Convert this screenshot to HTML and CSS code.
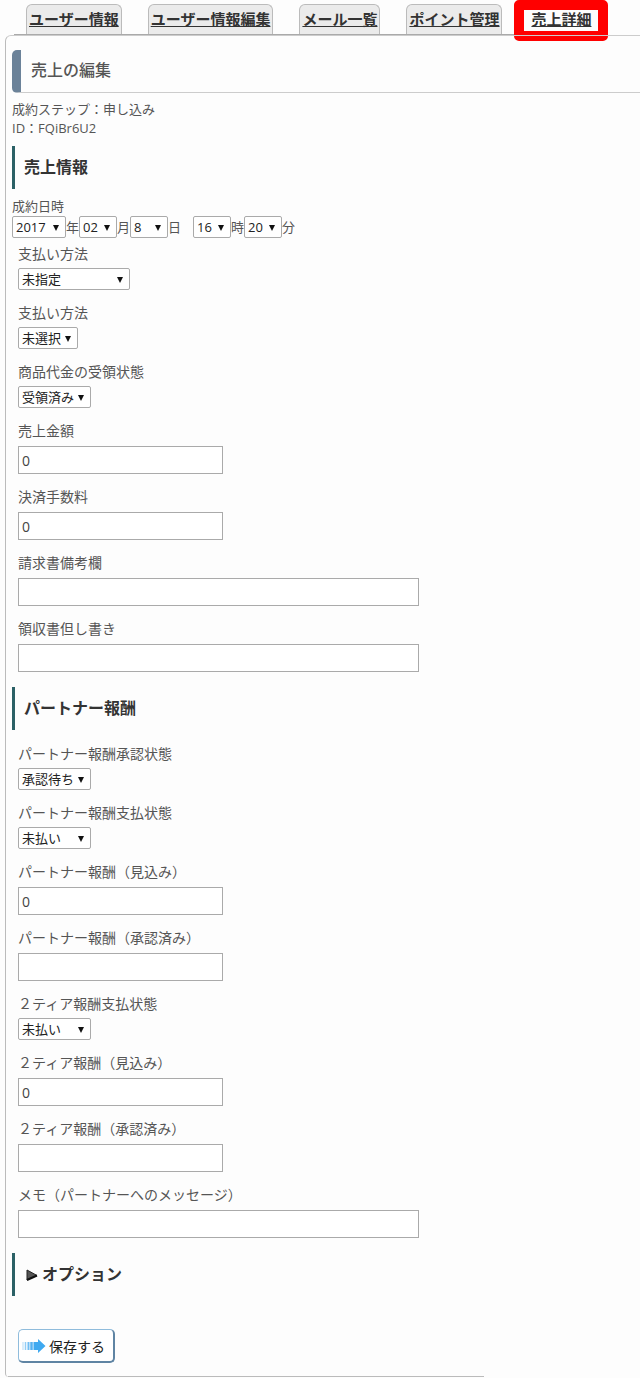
FILE: index.html
```html
<!DOCTYPE html>
<html lang="ja">
<head>
    <meta charset="UTF-8">
    <meta name="viewport" content="width=device-width, initial-scale=1">
    <title>売上の編集</title>
    <link rel="stylesheet" href="styles.css">
</head>
<body>
    <!-- タブ -->
    <nav class="tabs">
        <a class="tab" href="#">ユーザー情報</a>
        <a class="tab" href="#">ユーザー情報編集</a>
        <a class="tab" href="#">メール一覧</a>
        <a class="tab" href="#">ポイント管理</a>
        <a class="tab active" href="#">売上詳細</a>
    </nav>

    <main class="panel">
        <h1 class="page-title">売上の編集</h1>
        <div class="summary">
            <div>成約ステップ：申し込み</div>
            <div>ID：FQiBr6U2</div>
        </div>

        <form>
            <!-- 売上情報 -->
            <h2 class="section-title">売上情報</h2>
            <div class="date-label">成約日時</div>
            <div class="date-row">
                <span class="select w-year"><select id="year" aria-label="年"><option>2017</option></select></span>
                <label for="year">年</label>
                <span class="select w-num"><select id="month" aria-label="月"><option>02</option></select></span>
                <label for="month">月</label>
                <span class="select w-num"><select id="day" aria-label="日"><option>8</option></select></span>
                <label class="day-unit" for="day">日</label>
                <span class="select w-num"><select id="hour" aria-label="時"><option>16</option></select></span>
                <label for="hour">時</label>
                <span class="select w-num"><select id="minute" aria-label="分"><option>20</option></select></span>
                <label for="minute">分</label>
            </div>

            <div class="fields">
                <div class="field">
                    <label for="pay1">支払い方法</label>
                    <span class="select w-long"><select id="pay1"><option>未指定</option></select></span>
                </div>
                <div class="field">
                    <label for="pay2">支払い方法</label>
                    <span class="select w-short"><select id="pay2"><option>未選択</option></select></span>
                </div>
                <div class="field">
                    <label for="receipt">商品代金の受領状態</label>
                    <span class="select w-mid"><select id="receipt"><option>受領済み</option></select></span>
                </div>
                <div class="field">
                    <label for="amount">売上金額</label>
                    <input type="text" id="amount" value="0">
                </div>
                <div class="field">
                    <label for="fee">決済手数料</label>
                    <input type="text" id="fee" value="0">
                </div>
                <div class="field">
                    <label for="invoice">請求書備考欄</label>
                    <input type="text" class="wide" id="invoice">
                </div>
                <div class="field">
                    <label for="proviso">領収書但し書き</label>
                    <input type="text" class="wide" id="proviso">
                </div>
            </div>

            <!-- パートナー報酬 -->
            <h2 class="section-title">パートナー報酬</h2>
            <div class="fields">
                <div class="field">
                    <label for="approve">パートナー報酬承認状態</label>
                    <span class="select w-mid"><select id="approve"><option>承認待ち</option></select></span>
                </div>
                <div class="field">
                    <label for="paid">パートナー報酬支払状態</label>
                    <span class="select w-mid"><select id="paid"><option>未払い</option></select></span>
                </div>
                <div class="field">
                    <label for="reward1">パートナー報酬（見込み）</label>
                    <input type="text" id="reward1" value="0">
                </div>
                <div class="field">
                    <label for="reward2">パートナー報酬（承認済み）</label>
                    <input type="text" id="reward2">
                </div>
                <div class="field">
                    <label for="tier-paid">２ティア報酬支払状態</label>
                    <span class="select w-mid"><select id="tier-paid"><option>未払い</option></select></span>
                </div>
                <div class="field">
                    <label for="tier1">２ティア報酬（見込み）</label>
                    <input type="text" id="tier1" value="0">
                </div>
                <div class="field">
                    <label for="tier2">２ティア報酬（承認済み）</label>
                    <input type="text" id="tier2">
                </div>
                <div class="field">
                    <label for="memo">メモ（パートナーへのメッセージ）</label>
                    <input type="text" class="wide" id="memo">
                </div>
            </div>

            <!-- オプション -->
            <h2 class="section-title">
                <svg class="toggle" width="12" height="12" viewBox="0 0 12 12" aria-hidden="true">
                    <path d="M1 1 L11 6.5 L1 11 Z" fill="#555" stroke="#222"/>
                    <path d="M1 11 L11 6.5" stroke="#111" stroke-width="2"/>
                </svg>
                オプション
            </h2>

            <button type="submit" class="save">
                <svg width="24" height="14" viewBox="0 0 24 14" aria-hidden="true">
                    <path d="M1 3V11" stroke="#b5dcf7" stroke-width="1"/>
                    <path d="M3.5 3V11" stroke="#93cdf5" stroke-width="1.5"/>
                    <path d="M6.5 3V11" stroke="#6fbdf3" stroke-width="2"/>
                    <path d="M9.5 3V11" stroke="#55b1f0" stroke-width="2.5"/>
                    <path d="M11.5 3H16V0L23.5 7L16 14V11H11.5Z" fill="#3fa9f0"/>
                </svg>
                保存する
            </button>
        </form>
    </main>
</body>
</html>
```
FILE: styles.css
```css
* {
    box-sizing: border-box;
}

body {
    margin: 0;
    font-family: "Open Sans", "Noto Sans CJK JP", sans-serif;
    font-size: 13px;
    line-height: 19px;
    color: #555;
    background: #fdfdfd;
}

/* タブ */
.tabs {
    display: flex;
    gap: 26px;
    width: fit-content;
    height: 36px;
    margin: 0 0 -1px 14px;
    padding: 4px 0 0 12px;
    border-bottom: 2px solid #aaa;
}
.tab {
    padding: 0 2px;
    border: 1px solid #bbb;
    border-bottom: none;
    border-radius: 6px 6px 0 0;
    background: #ebebeb;
    color: #333;
    font-size: 15px;
    font-weight: bold;
    line-height: 28px;
    white-space: nowrap;
}
.tab.active {
    position: relative;
    border-color: transparent;
    background: #fdfdfd;
}
/* 選択中タブの赤枠 */
.tab.active::after {
    content: "";
    position: absolute;
    inset: -5px -15px -7px;
    border: 10px solid #f00;
    border-radius: 5px;
}

/* パネル */
.panel {
    position: relative;
    margin-left: 5px;
    padding: 14px 0 14px 6px;
    border-top: 1px solid #ccc;
    border-left: 1px solid #bbb;
    border-radius: 6px 0 0 4px;
}
.panel::after {
    content: "";
    position: absolute;
    left: 2px;
    bottom: 0;
    width: 75%;
    border-bottom: 1px solid #bbb;
}

.page-title {
    margin: 0 0 7px;
    padding: 0 0 2px 10px;
    border-left: 9px solid #6b8299;
    border-bottom: 1px solid #ccc;
    border-radius: 5px 0 0 5px;
    font-size: 16px;
    font-weight: 500;
    line-height: 40px;
    color: #555;
}
.section-title {
    display: flex;
    align-items: center;
    gap: 4px;
    margin: 8px 0;
    padding-left: 9px;
    border-left: 3px solid #2b6166;
    font-size: 16px;
    font-weight: bold;
    line-height: 43px;
    color: #333;
}
.toggle {
    margin-left: 2px;
}

/* 成約日時 */
.date-row {
    display: flex;
    line-height: 22px;
}
.day-unit {
    margin-right: 12px;
}

/* 入力欄 */
.fields {
    display: grid;
    gap: 13px;
    padding: 6px 6px 7px;
}
.field {
    display: flex;
    flex-direction: column;
    align-items: flex-start;
    font-size: 14px;
}
.field label {
    line-height: 20px;
}
.select {
    position: relative;
    display: block;
}
.field .select {
    margin-top: 4px;
}
.select select {
    display: block;
    width: 100%;
    height: 22px;
    padding: 0 3px;
    border: 1px solid #aaa;
    border-radius: 2px;
    background: #fff;
    color: #222;
    font-family: inherit;
    font-size: 13px;
    line-height: 20px;
    appearance: none;
}
.select::after {
    content: "";
    position: absolute;
    right: 7px;
    top: 9px;
    border: 3px solid transparent;
    border-top: 6px solid #111;
    border-bottom: none;
    pointer-events: none;
}
.w-year { width: 54px; }
.w-num { width: 38px; }
.w-short { width: 60px; }
.w-mid { width: 73px; }
.w-long { width: 112px; }

input[type="text"] {
    width: 205px;
    max-width: 100%;
    height: 28px;
    margin: 5px 0 0;
    padding: 0 3px;
    border: 1px solid #aaa;
    background: #fff;
    color: #444;
    font-family: inherit;
    font-size: 14px;
}
input[type="text"].wide {
    width: 401px;
}

/* 保存ボタン */
.save {
    display: flex;
    align-items: center;
    gap: 3px;
    height: 34px;
    margin: 33px 0 0 6px;
    padding: 0 8px 0 3px;
    border: 1px solid #8fbcdc;
    border-right: 2px solid #5f84a3;
    border-bottom: 2px solid #5f84a3;
    border-radius: 5px;
    background: #fff;
    color: #222;
    font-family: inherit;
    font-size: 14px;
    cursor: pointer;
}
```
